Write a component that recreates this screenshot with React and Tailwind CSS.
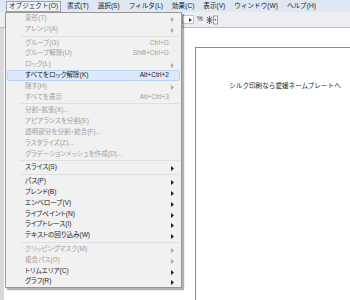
const menuBar = [
  "オブジェクト(O)",
  "書式(T)",
  "選択(S)",
  "フィルタ(L)",
  "効果(C)",
  "表示(V)",
  "ウィンドウ(W)",
  "ヘルプ(H)",
];

const items = [
  { label: "変形(T)", dis: true, sub: true },
  { label: "アレンジ(A)", dis: true, sub: true },
  "sep",
  { label: "グループ(G)", dis: true, keys: "Ctrl+G" },
  { label: "グループ解除(U)", dis: true, keys: "Shift+Ctrl+G" },
  { label: "ロック(L)", dis: true, sub: true },
  { label: "すべてをロック解除(K)", keys: "Alt+Ctrl+2", active: true },
  { label: "隠す(H)", dis: true, sub: true },
  { label: "すべてを表示", dis: true, keys: "Alt+Ctrl+3" },
  "sep",
  { label: "分割・拡張(X)...", dis: true },
  { label: "アピアランスを分割(E)", dis: true },
  { label: "透明部分を分割・統合(F)...", dis: true },
  { label: "ラスタライズ(Z)...", dis: true },
  { label: "グラデーションメッシュを作成(D)...", dis: true },
  "sep",
  { label: "スライス(S)", sub: true },
  "sep",
  { label: "パス(P)", sub: true },
  { label: "ブレンド(B)", sub: true },
  { label: "エンベロープ(V)", sub: true },
  { label: "ライブペイント(N)", sub: true },
  { label: "ライブトレース(I)", sub: true },
  { label: "テキストの回り込み(W)", sub: true },
  "sep",
  { label: "クリッピングマスク(M)", dis: true, sub: true },
  { label: "複合パス(O)", dis: true, sub: true },
  { label: "トリムエリア(C)", sub: true },
  { label: "グラフ(R)", sub: true },
];

function Arrow({ dis }) {
  return (
    <svg width="3" height="5" viewBox="0 0 3 5" className="absolute right-[5px] top-[3px]">
      <path d="M0 0 L3 2.5 L0 5 Z" fill={dis ? "#a8a8a8" : "#222"} />
    </svg>
  );
}

function MenuRow({ item }) {
  if (item === "sep") {
    return (
      <div className="h-[3px] pl-[15px] pr-[2px] flex flex-col justify-center">
        <div className="h-px bg-[#e0e0e0]" />
      </div>
    );
  }
  return (
    <div
      className={
        "relative h-[10.8px] flex items-center pl-[17px] pr-[10px] mx-px " +
        (item.active ? "bg-[#dbe9fa] border border-[#b7d3f5] rounded-[2px] " : "border border-transparent ") +
        (item.dis ? "text-[#a0a0a0]" : "text-[#1c1c1c]")
      }
    >
      <span className="flex-1 whitespace-nowrap [font-feature-settings:'palt']">{item.label}</span>
      {item.keys && <span className="whitespace-nowrap">{item.keys}</span>}
      {item.sub && <Arrow dis={item.dis} />}
    </div>
  );
}

function ZoomIcon() {
  return (
    <svg width="12" height="10" viewBox="0 0 12 10">
      <path d="M1 2 L6 8 M6 2 L1 8 M3.5 1 L3.5 9 M0.5 5 L6.5 5" stroke="#555" strokeWidth="0.9" />
      <rect x="7.5" y="1" width="4" height="8" fill="#fff" stroke="#777" strokeWidth="0.7" />
      <path d="M8.5 4 L10.5 4 L9.5 6 Z" fill="#333" />
    </svg>
  );
}

export default function App() {
  return (
    <div
      className="relative w-[350px] h-[300px] overflow-hidden bg-white text-[6.6px] leading-none"
      style={{ fontFamily: '"Liberation Sans", "Noto Sans CJK JP", sans-serif' }}
    >
      {/* menu bar */}
      <div className="h-[12px] flex items-center pl-[6px] gap-[3px] bg-[#dfe7f2] text-[#1a1a1a]">
        {menuBar.map((m, i) => (
          <div
            key={m}
            className={
              "h-[11px] flex items-center px-[2px] whitespace-nowrap border " +
              (i === 0 ? "bg-[#edf2f9] border-[#8fa4c2]" : "border-transparent")
            }
          >
            {m}
          </div>
        ))}
      </div>

      {/* control bar */}
      <div className="h-[16px] flex items-center bg-[#eceef1] border-b border-[#b9bcc1] pl-[182px]">
        <div className="w-[12px] h-[9px] bg-white border border-[#c4c4c4] flex items-center justify-end pr-px">
          <svg width="3" height="4" viewBox="0 0 3 4">
            <path d="M0 0 L3 2 L0 4 Z" fill="#333" />
          </svg>
        </div>
        <span className="ml-[3px] text-[#333]">%</span>
        <div className="ml-[3px]">
          <ZoomIcon />
        </div>
      </div>

      {/* document area */}
      <div className="flex h-[272px]">
        <div className="w-[4px] bg-[#d6d8dc]" />
        <div className="flex-1 pl-[191px] pt-[19px]">
          <div className="h-[260px] border-l border-t border-[#8a8a8a] flex justify-center pt-[35px] pl-[24px] text-[#222]">
            <span className="whitespace-nowrap">シルク印刷なら愛媛ネームプレートへ</span>
          </div>
        </div>
      </div>

      {/* dropdown menu */}
      <div className="absolute left-[5px] top-[12px] w-[177px] bg-[#f1f1f1] border border-[#979797] shadow-[2px_2px_1px_rgba(0,0,0,0.3)]">
        {items.map((it, i) => (
          <MenuRow key={i} item={it} />
        ))}
      </div>
    </div>
  );
}
